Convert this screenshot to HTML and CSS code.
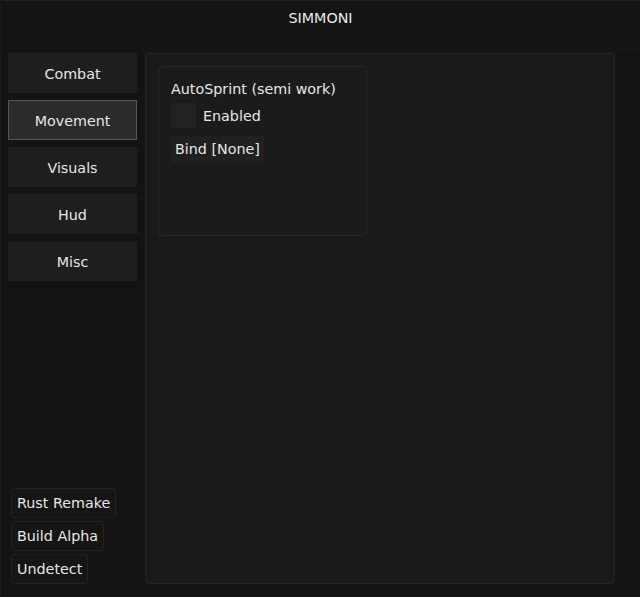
FILE: index.html
```html
<!DOCTYPE html>
<html>
<head>
<meta charset="utf-8">
<link rel="stylesheet" href="styles.css">
</head>
<body>
<div class="window">
  <div class="header"><span class="title">SIMMONI</span></div>
  <div class="main">
    <div class="sidebar">
      <div class="tabs">
        <div class="tab">Combat</div>
        <div class="tab active">Movement</div>
        <div class="tab">Visuals</div>
        <div class="tab">Hud</div>
        <div class="tab">Misc</div>
      </div>
      <div class="info">
        <div class="tag">Rust Remake</div>
        <div class="tag">Build Alpha</div>
        <div class="tag">Undetect</div>
      </div>
    </div>
    <div class="panel">
      <div class="group">
        <div class="group-title">AutoSprint (semi work)</div>
        <div class="check-row">
          <div class="checkbox"></div>
          <span class="check-label">Enabled</span>
        </div>
        <div class="bind">Bind [None]</div>
      </div>
    </div>
  </div>
</div>
</body>
</html>
```

FILE: styles.css
```css
html, body {
  margin: 0;
  padding: 0;
  background: #111111;
}
body {
  font-family: "DejaVu Sans", Verdana, sans-serif;
  font-size: 14.3px;
  color: #e6e6e6;
}
.window {
  width: 640px;
  height: 597px;
  box-sizing: border-box;
  border-top: 1px solid #1f1f1f;
  border-left: 1px solid #1b1b1b;
  background: #131313;
  display: flex;
  flex-direction: column;
}
.header {
  height: 52px;
  box-sizing: border-box;
  padding-top: 8px;
  text-align: center;
  line-height: 18px;
  background: #141414;
}
.title {
  color: #eaeaea;
}
.main {
  display: flex;
  gap: 8px;
  padding-left: 7px;
}
.sidebar {
  width: 129px;
  height: 531px;
  display: flex;
  flex-direction: column;
  justify-content: space-between;
}
.tabs {
  display: flex;
  flex-direction: column;
  gap: 7px;
}
.tab {
  height: 40px;
  box-sizing: border-box;
  padding-top: 1px;
  background: #1e1e1e;
  border: 1px solid #1e1e1e;
  display: flex;
  align-items: center;
  justify-content: center;
  color: #e6e6e6;
}
.tab.active {
  background: #2b2b2b;
  border-color: #555555;
}
.info {
  display: flex;
  flex-direction: column;
  align-items: flex-start;
  gap: 3px;
  padding-left: 3px;
}
.tag {
  height: 30px;
  box-sizing: border-box;
  padding: 0 5px;
  background: #151515;
  border: 1px solid #232323;
  border-radius: 3px;
  display: flex;
  align-items: center;
  color: #e6e6e6;
}
.panel {
  width: 470px;
  height: 531px;
  box-sizing: border-box;
  background: #1a1a1a;
  border: 1px solid #242424;
  border-radius: 3px;
  padding: 12px;
}
.group {
  width: 209px;
  height: 170px;
  box-sizing: border-box;
  background: #1b1b1b;
  border: 1px solid #262626;
  border-radius: 3px;
  padding: 13px 12px;
  display: flex;
  flex-direction: column;
  align-items: flex-start;
}
.group-title {
  line-height: 18px;
  color: #e8e8e8;
}
.check-row {
  margin-top: 5px;
  display: flex;
  align-items: center;
  gap: 7px;
}
.checkbox {
  width: 25px;
  height: 25px;
  background: #222222;
  border-radius: 1px;
}
.check-label {
  color: #e6e6e6;
}
.bind {
  margin-top: 8px;
  height: 25px;
  box-sizing: border-box;
  padding: 0 4px;
  background: #202020;
  display: flex;
  align-items: center;
  color: #e6e6e6;
}
```
